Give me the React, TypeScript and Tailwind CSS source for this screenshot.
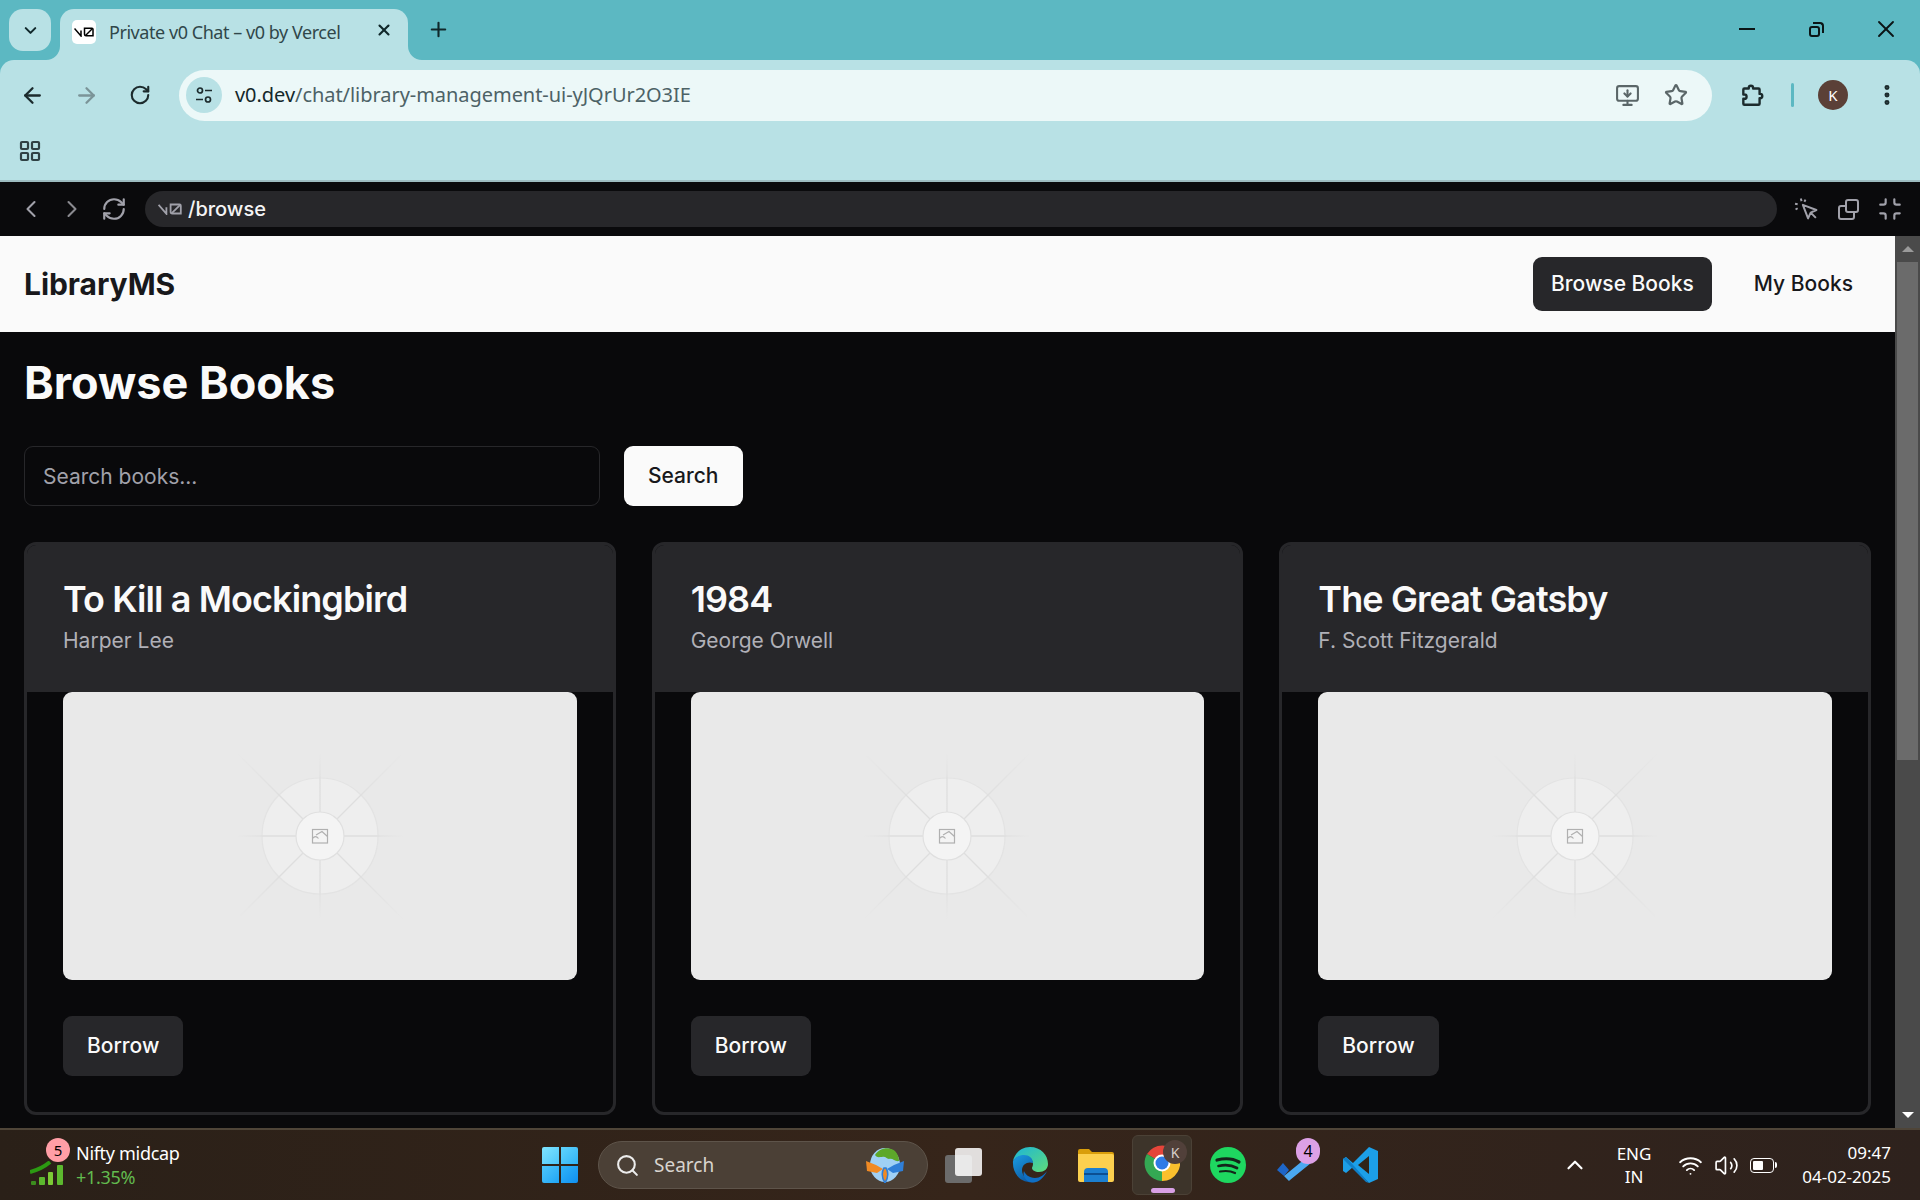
import React from 'react';
import {
  ArrowLeft,
  ArrowRight,
  ChevronDown,
  ChevronLeft,
  ChevronRight,
  ChevronUp,
  EllipsisVertical,
  LayoutGrid,
  Minimize,
  MonitorDown,
  Plus,
  RefreshCw,
  RotateCw,
  Search,
  Star,
  Volume2,
  Wifi,
  X,
} from 'lucide-react';

const books = [
  { title: 'To Kill a Mockingbird', author: 'Harper Lee' },
  { title: '1984', author: 'George Orwell' },
  { title: 'The Great Gatsby', author: 'F. Scott Fitzgerald' },
];

function V0Logo({ className }: { className?: string }) {
  return (
    <svg viewBox="0 0 40 20" className={className} fill="none" stroke="currentColor" strokeWidth="3">
      <path d="M1 3l13 15V7" />
      <path d="M21 2.500h15a2 2 0 0 1 2 2V17.500H24a3 3 0 0 1-3-3z" />
      <path d="M23 17L37 3" />
    </svg>
  );
}

function Placeholder() {
  const straight = [
    [0, -24, 0, -84],
    [0, 24, 0, 84],
    [-24, 0, -84, 0],
    [24, 0, 84, 0],
  ];
  const diagonal = [
    [-17, -17, -84, -84],
    [17, -17, 84, -84],
    [-17, 17, -84, 84],
    [17, 17, 84, 84],
  ];
  return (
    <div className="h-[288px] rounded-[9px] bg-[#e9e9e9] flex items-center justify-center">
      <svg viewBox="-144 -108 288 216" className="w-[288px] h-[216px]">
        <defs>
          <radialGradient id="rayFade" gradientUnits="userSpaceOnUse" cx="0" cy="0" r="84">
            <stop offset="0.68" stopColor="#dedede" />
            <stop offset="0.72" stopColor="#e2e2e2" />
            <stop offset="1" stopColor="#e9e9e9" />
          </radialGradient>
          <radialGradient id="diagFade" gradientUnits="userSpaceOnUse" cx="0" cy="0" r="118">
            <stop offset="0.48" stopColor="#dedede" />
            <stop offset="0.52" stopColor="#e0e0e0" />
            <stop offset="1" stopColor="#e9e9e9" />
          </radialGradient>
        </defs>
        <circle cx="0" cy="0" r="58" fill="#eeeeee" stroke="#e3e3e3" strokeWidth="1.2" />
        {straight.map(([x1, y1, x2, y2], i) => (
          <line key={i} x1={x1} y1={y1} x2={x2} y2={y2} stroke="url(#rayFade)" strokeWidth="1.3" />
        ))}
        {diagonal.map(([x1, y1, x2, y2], i) => (
          <line key={i} x1={x1} y1={y1} x2={x2} y2={y2} stroke="url(#diagFade)" strokeWidth="1.3" />
        ))}
        <circle cx="0" cy="0" r="24" fill="#f4f4f4" stroke="#e0e0e0" strokeWidth="1.2" />
        <g fill="none" stroke="#b0b0b0" strokeWidth="1.2">
          <rect x="-7.500" y="-6.500" width="15" height="13.500" />
          <path d="M-7.500 2.500c2-2.500 4-2.500 6 0M-4 -1l6-3.500 5.500 5" />
        </g>
      </svg>
    </div>
  );
}

function BookCard({ title, author }: { title: string; author: string }) {
  return (
    <div className="rounded-[12px] border-[3px] border-[#27272a] bg-[#09090b] overflow-hidden">
      <div className="bg-[#27272a] px-[36px] pt-[36px] pb-[36px] flex flex-col gap-[9px]">
        <h3 className="text-[36px] leading-[36px] font-semibold tracking-[-0.9px] text-[#fafafa]">{title}</h3>
        <p className="text-[21px] leading-[30px] text-[#b0b0b7]">{author}</p>
      </div>
      <div className="px-[36px]">
        <Placeholder />
      </div>
      <div className="px-[36px] pt-[36px] pb-[36px]">
        <button className="h-[60px] px-[24px] rounded-[9px] bg-[#27272a] text-[21px] font-medium text-[#fafafa]">
          Borrow
        </button>
      </div>
    </div>
  );
}

function TabFlare({ side }: { side: 'left' | 'right' }) {
  return (
    <svg
      viewBox="0 0 14 14"
      className={side === 'left' ? 'absolute bottom-0 left-[-14px] w-[14px] h-[14px]' : 'absolute bottom-0 right-[-14px] w-[14px] h-[14px]'}
    >
      <path d={side === 'left' ? 'M14 0v14H0A14 14 0 0 0 14 0z' : 'M0 0v14h14A14 14 0 0 1 0 0z'} fill="#b8e1e5" />
    </svg>
  );
}

function BrowserChrome() {
  return (
    <div className="bg-[#5cb8c2] font-['Noto_Sans',sans-serif]">
      {/* Tab strip */}
      <div className="h-[60px] flex items-end relative">
        <div className="ml-[9px] mb-[9px] w-[42px] h-[42px] rounded-[14px] bg-[#b8e1e5] flex items-center justify-center">
          <ChevronDown className="w-[19px] h-[19px] text-[#10282b]" strokeWidth={2.6} />
        </div>
        <div className="ml-[9px] w-[348px] h-[51px] bg-[#b8e1e5] rounded-t-[14px] relative flex items-center pl-[12px] pb-[5px]">
          <TabFlare side="left" />
          <TabFlare side="right" />
          <div className="w-[24px] h-[24px] rounded-[5px] bg-white flex items-center justify-center text-black">
            <V0Logo className="w-[20px] h-[10px]" />
          </div>
          <span className="ml-[13px] text-[18px] text-[#30474a] tracking-[-0.45px] whitespace-nowrap">Private v0 Chat – v0 by Vercel</span>
          <X className="absolute left-[315px] top-[12px] w-[18px] h-[18px] text-[#10282b]" strokeWidth={2.8} />
        </div>
        <Plus className="ml-[19px] mb-[19px] w-[23px] h-[23px] text-[#10282b]" strokeWidth={2.2} />
        <div className="ml-auto flex items-center h-[60px] pb-[2px] text-[#0b1516]">
          <div className="w-[16px] h-[2.500px] bg-[#0b1516] mr-[54px]" />
          <div className="relative w-[15px] h-[15px] mr-[48px]">
            <div className="absolute left-0 bottom-0 w-[11px] h-[11px] border-[2px] border-[#0b1516] rounded-[3px]" />
            <div className="absolute right-0 top-0 w-[11px] h-[11px] border-t-[2px] border-r-[2px] border-[#0b1516] rounded-tr-[4px]" />
          </div>
          <X className="w-[28px] h-[28px] mr-[20px]" strokeWidth={1.6} />
        </div>
      </div>

      {/* Toolbar + bookmarks */}
      <div className="bg-[#b8e1e5] rounded-t-[14px] h-[122px] border-b-[2px] border-[#9dbcc0]">
        <div className="h-[70px] flex items-center">
          <ArrowLeft className="ml-[20px] w-[25px] h-[25px] text-[#1c2b2d]" strokeWidth={2.2} />
          <ArrowRight className="ml-[29px] w-[25px] h-[25px] text-[#7b9498]" strokeWidth={2.2} />
          <RotateCw className="ml-[30px] w-[22px] h-[22px] text-[#1c2b2d]" strokeWidth={2.3} />
          <div className="ml-[28px] w-[1533px] h-[51px] rounded-full bg-[#ecf8f8] flex items-center pl-[7px]">
            <div className="w-[36px] h-[36px] rounded-full bg-[#b8e1e5] flex items-center justify-center">
              <svg viewBox="0 0 20 20" className="w-[20px] h-[20px]" fill="none" stroke="#1c2b2d" strokeWidth="1.7">
                <circle cx="6" cy="5.500" r="2.500" />
                <path d="M11 5.500h7M2 14.500h7" />
                <circle cx="14" cy="14.500" r="2.500" />
              </svg>
            </div>
            <span className="ml-[13px] text-[20px] tracking-[-0.05px] text-[#14282b] whitespace-nowrap">
              v0.dev<span className="text-[#4d6266]">/chat/library-management-ui-yJQrUr2O3IE</span>
            </span>
            <MonitorDown className="ml-auto mr-[24px] w-[25px] h-[25px] text-[#5a6668]" strokeWidth={2} />
            <Star className="mr-[24px] w-[24px] h-[24px] text-[#5a6668]" strokeWidth={2.2} />
          </div>
          <svg viewBox="0 0 24 24" className="ml-[27px] w-[26px] h-[26px]" fill="none" stroke="#1c2b2d" strokeWidth="2.2" strokeLinejoin="round">
            <path d="M9 5.500a2 2 0 0 1 4 0V6h5a1 1 0 0 1 1 1v4h.5a2 2 0 0 1 0 4H19v5a1 1 0 0 1-1 1H5a1 1 0 0 1-1-1v-4.500h1a2 2 0 0 0 0-4H4V7a1 1 0 0 1 1-1h4z" />
          </svg>
          <div className="ml-[26px] w-[3px] h-[24px] rounded bg-[#5cb8c2]" />
          <div className="ml-[24px] w-[30px] h-[30px] rounded-full bg-[#5b4037] flex items-center justify-center text-[15px] text-white">
            K
          </div>
          <EllipsisVertical className="ml-[26px] w-[26px] h-[26px] text-[#1c2b2d]" strokeWidth={2.6} />
        </div>
        <div className="pl-[18px] pt-[9px]">
          <LayoutGrid className="w-[24px] h-[24px] text-[#2f4144]" strokeWidth={2.2} />
        </div>
      </div>
    </div>
  );
}

function PreviewBar() {
  return (
    <div className="h-[54px] bg-[#0a0a0c] flex items-center font-['Inter',sans-serif]">
      <ChevronLeft className="ml-[17px] w-[28px] h-[28px] text-[#a1a1aa]" strokeWidth={1.8} />
      <ChevronRight className="ml-[13px] w-[28px] h-[28px] text-[#8a8a90]" strokeWidth={1.8} />
      <RefreshCw className="ml-[15px] w-[26px] h-[26px] text-[#a1a1aa]" strokeWidth={2} />
      <div className="ml-[18px] w-[1632px] h-[36px] rounded-full bg-[#27272a] flex items-center pl-[13px]">
        <V0Logo className="w-[24px] h-[12px] text-[#a1a1aa]" />
        <span className="ml-[6px] text-[20px] font-medium text-[#f4f4f5]">/browse</span>
      </div>
      <svg viewBox="0 0 24 24" className="ml-[17px] w-[25px] h-[25px]" fill="none" stroke="#a1a1aa" strokeWidth="1.9" strokeLinejoin="round">
        <path d="M8.500 7.500l13 5-5.500 2.500-2.500 5.500zM16 15l5 5" />
        <path d="M6.500 1.500l.8 2.500M1 6.500l2.500.5M1.500 12l2-1.200M11 2.500l-1 2" />
      </svg>
      <div className="ml-[19px] relative w-[21px] h-[21px]">
        <div className="absolute left-0 bottom-0 w-[17px] h-[15px] border-[2px] border-[#a1a1aa] rounded-[3px]" />
        <div className="absolute right-0 top-0 w-[14px] h-[14px] border-[2px] border-[#a1a1aa] rounded-[3px] bg-[#0a0a0c]" />
      </div>
      <Minimize className="ml-[18px] w-[26px] h-[26px] text-[#a1a1aa]" strokeWidth={2} />
    </div>
  );
}

function Scrollbar() {
  return (
    <div className="w-[25px] bg-[#4a4a4a] flex flex-col items-center shrink-0">
      <div className="h-[26px] flex items-center justify-center">
        <div className="w-0 h-0 border-x-[6px] border-x-transparent border-b-[6px] border-b-[#9a9a9a]" />
      </div>
      <div className="w-[21px] h-[498px] bg-[#6b6b6b]" />
      <div className="mt-auto h-[26px] flex items-center justify-center">
        <div className="w-0 h-0 border-x-[6px] border-x-transparent border-t-[6px] border-t-white" />
      </div>
    </div>
  );
}

function LibraryPage() {
  return (
    <div className="flex-1 min-w-0 bg-[#09090b] font-['Inter',sans-serif]">
      <nav className="h-[96px] bg-[#fafafa] flex items-center justify-between px-[24px]">
        <span className="text-[30px] font-bold tracking-[-0.05px] text-[#18181b]">LibraryMS</span>
        <div className="flex items-center gap-[24px]">
          <button className="h-[54px] px-[18px] rounded-[9px] bg-[#27272a] text-[21px] font-medium text-[#fafafa]">
            Browse Books
          </button>
          <button className="h-[54px] px-[18px] rounded-[9px] text-[21px] font-medium text-[#18181b]">My Books</button>
        </div>
      </nav>
      <main className="p-[24px]">
        <h1 className="text-[45px] leading-[54px] font-bold text-[#fafafa] mb-[36px]">Browse Books</h1>
        <div className="flex gap-[24px] mb-[36px]">
          <input
            placeholder="Search books..."
            className="w-[576px] h-[60px] px-[18px] rounded-[9px] border-[1.5px] border-[#27272a] bg-[#09090b] text-[21px] placeholder:text-[#a1a1aa] outline-none"
          />
          <button className="h-[60px] px-[24px] rounded-[9px] bg-[#fafafa] text-[21px] font-medium text-[#18181b]">
            Search
          </button>
        </div>
        <div className="grid grid-cols-3 gap-[36px]">
          {books.map((b) => (
            <BookCard key={b.title} title={b.title} author={b.author} />
          ))}
        </div>
      </main>
    </div>
  );
}

function WinLogo() {
  return (
    <div className="w-[36px] h-[36px] grid grid-cols-2 gap-[2px] shrink-0">
      <div className="rounded-tl-[2px] bg-gradient-to-br from-[#7ee4ff] to-[#4cc6fa]" />
      <div className="rounded-tr-[2px] bg-gradient-to-br from-[#5fd3fc] to-[#2fb3f7]" />
      <div className="rounded-bl-[2px] bg-gradient-to-br from-[#4cc6fa] to-[#1ea5f5]" />
      <div className="rounded-br-[2px] bg-gradient-to-br from-[#2fb3f7] to-[#0f8ff0]" />
    </div>
  );
}

function EarthIcon() {
  return (
    <svg viewBox="0 0 40 36" className="w-[40px] h-[36px] shrink-0">
      <ellipse cx="20" cy="18" rx="15" ry="17" fill="#9fd0f5" />
      <path d="M10 8c4-7 14-9 20-4 3 3 4 7 4 10-4 1-6-3-10-2-3 0-3-3-7-2-3 0-5 1-7-2z" fill="#5da82a" />
      <path d="M1 14l10 4 7 4-6 4-10-2z" fill="#f08a24" />
      <path d="M39 14l-10 4-7 4 6 4 10-2z" fill="#2f7fd8" />
      <path d="M19 21c-3 5-2 10 1 15 3-5 4-10 1-15z" fill="#f08a24" stroke="#2f7fd8" strokeWidth="1.500" />
    </svg>
  );
}

function EdgeIcon() {
  return (
    <svg viewBox="0 0 36 36" className="w-[36px] h-[36px] shrink-0">
      <defs>
        <linearGradient id="edgeA" x1="0" y1="0" x2="1" y2="1">
          <stop offset="0" stopColor="#1cb5d8" />
          <stop offset="1" stopColor="#5fdc7a" />
        </linearGradient>
        <linearGradient id="edgeB" x1="0" y1="0" x2="0.600" y2="1">
          <stop offset="0" stopColor="#1b9de2" />
          <stop offset="1" stopColor="#0c59a4" />
        </linearGradient>
      </defs>
      <path d="M18 0c11 0 18 8 18 17 0 5-4 8-9 8-4 0-7-2-7-4 0-1 1-2 1-4 0-5-5-8-10-8-4 0-8 2-10 5C3 6 9 0 18 0z" fill="url(#edgeA)" />
      <path d="M1 14c3-5 8-6 11-6 5 0 9 3 9 8-5-2-11 1-11 7 0 6 6 13 14 12C11 37 0 29 1 14z" fill="url(#edgeB)" />
      <path d="M35 24c-3 7-9 12-15 11.500C14 35 10 29 12 24c1 3 5 7 11 7 5 0 9-3 12-7z" fill="#0f6fc4" />
    </svg>
  );
}

function FolderIcon() {
  return (
    <svg viewBox="0 0 36 34" className="w-[36px] h-[34px] shrink-0">
      <path d="M0 3a2 2 0 0 1 2-2h9l3 3h20a2 2 0 0 1 2 2v6H0z" fill="#d99e0b" />
      <path d="M0 6h34a2 2 0 0 1 2 2v24a2 2 0 0 1-2 2H2a2 2 0 0 1-2-2z" fill="#fcd04f" />
      <path d="M6 34V24a4 4 0 0 1 4-4h16a4 4 0 0 1 4 4v10z" fill="#1c7fd0" />
      <rect x="6" y="25" width="24" height="2" fill="#0c4f92" />
    </svg>
  );
}

function ChromeIcon() {
  return (
    <svg viewBox="0 0 36 36" className="w-[36px] h-[36px]">
      <path d="M18 18L3 9A18 18 0 0 1 33.600 9z" fill="#e5453a" />
      <path d="M18 18L33.600 9A18 18 0 0 1 18 36z" fill="#fbc02d" />
      <path d="M18 18V36A18 18 0 0 1 3 9z" fill="#34a853" />
      <circle cx="18" cy="18" r="8.500" fill="#fff" />
      <circle cx="18" cy="18" r="6.500" fill="#2f7be6" />
    </svg>
  );
}

function SpotifyIcon() {
  return (
    <svg viewBox="0 0 36 36" className="w-[36px] h-[36px] shrink-0">
      <circle cx="18" cy="18" r="18" fill="#1ed760" />
      <g fill="none" stroke="#14251a" strokeLinecap="round">
        <path d="M7 13c8-2 16-1.500 22 2" strokeWidth="3.200" />
        <path d="M8.500 19c7-1.500 13-1 18.500 2" strokeWidth="2.700" />
        <path d="M10 24.500c6-1 11-.5 15 1.500" strokeWidth="2.200" />
      </g>
    </svg>
  );
}

function TodoIcon() {
  return (
    <svg viewBox="0 0 36 24" className="w-[36px] h-[24px] shrink-0">
      <path d="M1 13l6-7 6 7-5 6z" fill="#1e66c8" />
      <path d="M8 19L30 1l5 5-21 17-1 1z" fill="#4aa8f0" />
    </svg>
  );
}

function CodeIcon() {
  return (
    <svg viewBox="0 0 36 36" className="w-[36px] h-[36px] shrink-0">
      <path d="M27 0l9 4v28l-9 4L11 20 4 26l-3-2V12l3-2 7 6z" fill="#1c9fe8" />
      <path d="M27 9v18l-11-9z" fill="#2f2419" />
      <path d="M1 12l3-2 23 26-3-1z" fill="#0f7fc8" />
    </svg>
  );
}

function Taskbar() {
  return (
    <div className="h-[72px] border-t-[2px] border-[#4f4538] bg-gradient-to-r from-[#2a2018] via-[#36251a] to-[#2e221d] flex items-center text-white font-['Noto_Sans',sans-serif]">
      {/* Stocks widget */}
      <div className="ml-[30px] relative w-[34px] h-[40px] shrink-0">
        <svg viewBox="0 0 34 24" className="absolute left-0 bottom-0 w-[34px] h-[24px]">
          <path d="M0 11c8-2 14-5 20-10" fill="none" stroke="#2c9a12" strokeWidth="4" />
          <rect x="1" y="20" width="5" height="4" rx="1" fill="#3c8d1e" />
          <rect x="9" y="16" width="6" height="8" rx="1" fill="#5cb82e" />
          <rect x="18" y="11" width="5" height="13" rx="1" fill="#7ccb35" />
          <rect x="27" y="4" width="6" height="20" rx="1" fill="#5cb82e" />
        </svg>
        <div className="absolute left-[16px] top-[-7px] w-[24px] h-[24px] rounded-full bg-[#ff9ea6] text-black text-[15px] flex items-center justify-center">
          5
        </div>
      </div>
      <div className="ml-[12px] w-[110px] shrink-0">
        <div className="text-[18px] leading-[24px] tracking-[-0.3px] whitespace-nowrap">Nifty midcap</div>
        <div className="text-[18px] leading-[24px] tracking-[-0.3px] text-[#62bb4f]">+1.35%</div>
      </div>

      {/* Center icons */}
      <div className="ml-[356px] shrink-0">
        <WinLogo />
      </div>
      <div className="ml-[20px] w-[330px] h-[48px] rounded-full bg-[#4b4036] border border-[#5e544a] flex items-center pl-[16px] pr-[22px] shrink-0">
        <Search className="w-[25px] h-[25px] text-[#ececec]" strokeWidth={2} />
        <span className="ml-[14px] text-[19px] text-[#d8d4cf]">Search</span>
        <div className="ml-auto">
          <EarthIcon />
        </div>
      </div>
      <div className="ml-[17px] relative w-[37px] h-[35px] shrink-0">
        <div className="absolute left-0 bottom-0 w-[27px] h-[28px] rounded-[3px] bg-[#6b6b6b]" />
        <div className="absolute right-0 top-0 w-[27px] h-[28px] rounded-[3px] bg-white/85" />
      </div>
      <div className="ml-[30px]">
        <EdgeIcon />
      </div>
      <div className="ml-[30px]">
        <FolderIcon />
      </div>
      <div className="ml-[18px] relative w-[60px] h-[60px] rounded-[6px] bg-[#3d342a] border border-[#4b4136] flex items-center justify-center shrink-0">
        <div className="mt-[-4px]">
          <ChromeIcon />
        </div>
        <div className="absolute left-[30px] top-[4px] w-[24px] h-[24px] rounded-full bg-[#51403a] text-[14px] text-[#d8cfca] flex items-center justify-center">
          K
        </div>
        <div className="absolute left-[18px] bottom-[1px] w-[24px] h-[5px] rounded-full bg-[#d8a0e6]" />
      </div>
      <div className="ml-[18px]">
        <SpotifyIcon />
      </div>
      <div className="ml-[30px] relative mt-[8px] shrink-0">
        <TodoIcon />
        <div className="absolute left-[20px] top-[-19px] w-[24px] h-[26px] rounded-full bg-[#dca0e6] text-black text-[16px] flex items-center justify-center">
          4
        </div>
      </div>
      <div className="ml-[30px]">
        <CodeIcon />
      </div>

      {/* Tray */}
      <ChevronUp className="ml-[184px] w-[26px] h-[26px] text-white shrink-0" strokeWidth={2} />
      <div className="ml-[21px] w-[50px] text-center text-[17px] leading-[23px] shrink-0">
        <div>ENG</div>
        <div>IN</div>
      </div>
      <Wifi className="ml-[19px] w-[25px] h-[25px] shrink-0" strokeWidth={1.8} />
      <Volume2 className="ml-[11px] w-[25px] h-[25px] shrink-0" strokeWidth={1.6} />
      <div className="ml-[11px] relative w-[24px] h-[15px] rounded-[4px] border-[1.5px] border-white shrink-0 p-[2px]">
        <div className="w-[10px] h-full rounded-[1px] bg-white" />
        <div className="absolute right-[-4px] top-[3px] w-[2px] h-[6px] rounded-r bg-white" />
      </div>
      <div className="ml-auto mr-[29px] text-right text-[17px] leading-[24px] shrink-0">
        <div>09:47</div>
        <div>04-02-2025</div>
      </div>
    </div>
  );
}

export default function App() {
  return (
    <div className="w-[1920px] h-[1200px] flex flex-col overflow-hidden bg-[#09090b]">
      <BrowserChrome />
      <PreviewBar />
      <div className="flex-1 min-h-0 flex overflow-hidden">
        <LibraryPage />
        <Scrollbar />
      </div>
      <Taskbar />
    </div>
  );
}
